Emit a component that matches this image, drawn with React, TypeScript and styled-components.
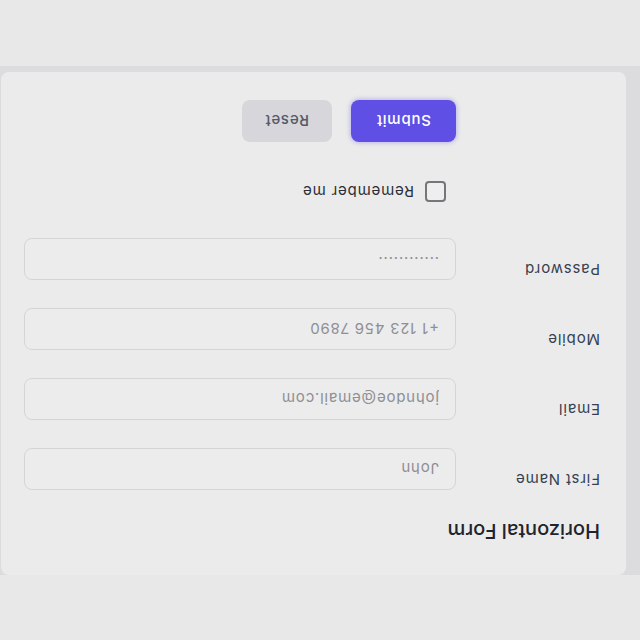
import React from "react";
import styled, { createGlobalStyle } from "styled-components";

const Global = createGlobalStyle`
  html, body { margin: 0; padding: 0; overflow: hidden; background: #e8e8e9; }
  * { box-sizing: border-box; }
`;

const Flip = styled.div`
  width: 640px;
  height: 640px;
  overflow: hidden;
  transform: rotate(180deg);
  background: #e8e8e9;
  font-family: Inter, "Liberation Sans", sans-serif;
  padding-top: 65px;
`;

const Shell = styled.div`
  background: #dcdcde;
  padding: 0 0 6px 14px;
`;

const Card = styled.form`
  width: 625px;
  background: #ebebeb;
  border-radius: 8px;
  padding: 30px 23px 28px 26px;
  display: flex;
  flex-direction: column;
`;

const Title = styled.h2`
  margin: 0 0 27px;
  font-size: 20px;
  line-height: 28px;
  font-weight: 500;
  color: #1f2430;
`;

const Grid = styled.div`
  display: grid;
  grid-template-columns: 144px 1fr;
  row-gap: 28px;
  letter-spacing: 0.8px;
`;

const Label = styled.label`
  font-size: 15px;
  line-height: 20px;
  padding-top: 1px;
  color: #374151;
`;

const Input = styled.input`
  height: 42px;
  width: 100%;
  border: 1px solid #d5d5d8;
  border-radius: 8px;
  background: #ececec;
  padding: 0 16px;
  font-family: inherit;
  font-size: 15px;
  letter-spacing: 0.8px;
  color: #1f2937;
  outline: none;
  &::placeholder { color: #8f8f95; }
`;

const CheckRow = styled.div`
  grid-column: 2;
  display: flex;
  align-items: center;
  gap: 11px;
  padding-left: 10px;
  margin-top: 8px;
  font-size: 15px;
  color: #2b2f38;
`;

const Box = styled.span`
  width: 21px;
  height: 21px;
  border: 2px solid #75757a;
  border-radius: 4px;
  background: #eeeeee;
`;

const Actions = styled.div`
  grid-column: 2;
  display: flex;
  gap: 19px;
  margin-top: 11px;
`;

const Button = styled.button<{ $primary?: boolean }>`
  height: 42px;
  padding: 0 ${(p) => (p.$primary ? "25px" : "23px")};
  border: none;
  border-radius: 8px;
  font-family: inherit;
  font-size: 15px;
  font-weight: 500;
  letter-spacing: 0.8px;
  background: ${(p) => (p.$primary ? "#604fe4" : "#d7d7db")};
  color: ${(p) => (p.$primary ? "#ffffff" : "#555a68")};
  box-shadow: ${(p) => (p.$primary ? "0 0 4px 1px rgba(96,79,228,0.35)" : "none")};
`;

export default function App() {
  return (
    <>
      <Global />
      <Flip>
        <Shell>
          <Card onSubmit={(e) => e.preventDefault()}>
            <Title>Horizontal Form</Title>
            <Grid>
              <Label>First Name</Label>
              <Input placeholder="John" />
              <Label>Email</Label>
              <Input placeholder="johndoe@email.com" />
              <Label>Mobile</Label>
              <Input placeholder="+1 123 456 7890" />
              <Label>Password</Label>
              <Input type="password" placeholder="············" />
              <CheckRow>
                <Box />
                <span>Remember me</span>
              </CheckRow>
              <Actions>
                <Button $primary type="submit">Submit</Button>
                <Button type="button">Reset</Button>
              </Actions>
            </Grid>
          </Card>
        </Shell>
      </Flip>
    </>
  );
}
